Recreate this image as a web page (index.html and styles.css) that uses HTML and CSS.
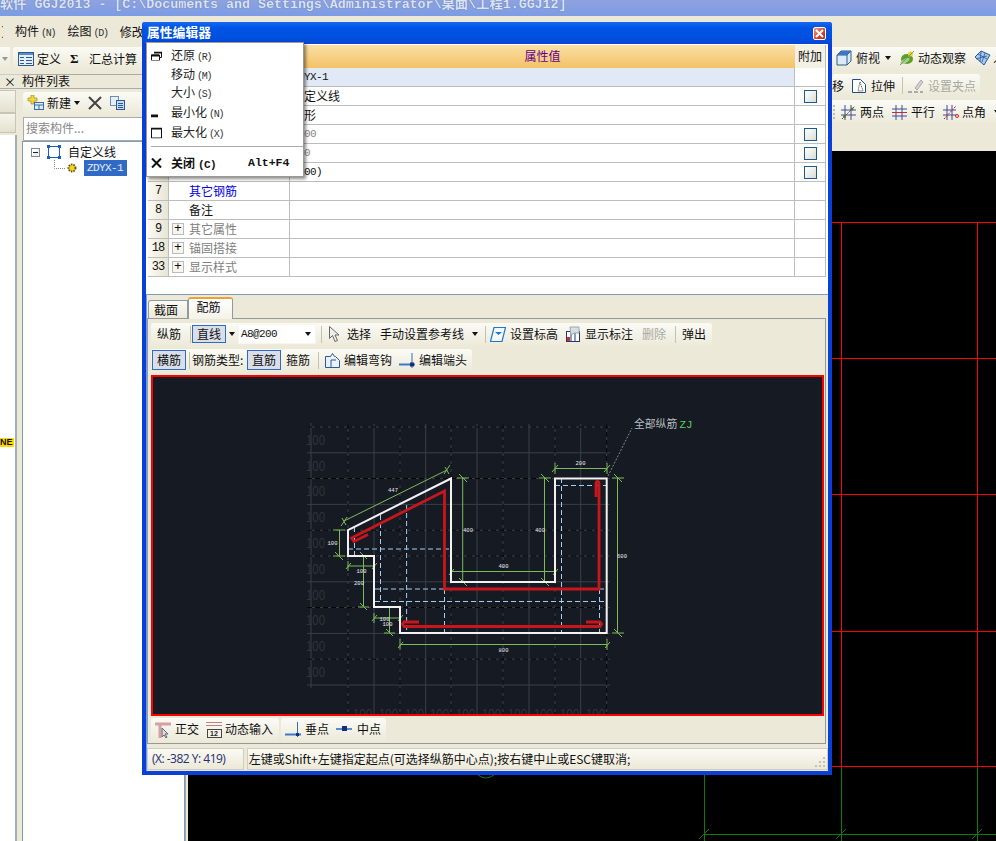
FILE: index.html
```html
<!DOCTYPE html>
<html lang="zh">
<head>
<meta charset="utf-8">
<title>GGJ2013</title>
<link rel="stylesheet" href="styles.css">
</head>
<body>
<div class="app">
  <div class="titlebar">软件 GGJ2013 - [C:\Documents and Settings\Administrator\桌面\工程1.GGJ12]</div>
  <div class="menubar">
    <span class="menu-cut">)</span>
    <span class="ml12">构件<span class="k">(N)</span></span>
    <span class="ml12">绘图<span class="k">(D)</span></span>
    <span class="ml12">修改</span>
  </div>
  <div class="workspace">
    <div class="side">
      <div class="side-tools">
        <span class="cutbar"><i class="arrow gray"></i></span>
        <div class="bar side-bar">
          <svg class="ml5" width="16" height="14" viewBox="0 0 16 14"><rect x=".5" y=".5" width="15" height="13" fill="#e6eef8" stroke="#2a5a96"/><rect x="1" y="1" width="14" height="2" fill="#5a8cc8"/><path d="M2 5.500h4M2 8.500h4M2 11.500h4M8 5.500h6M8 8.500h6M8 11.500h6" stroke="#2a5a96"/></svg>
          <span class="ml3">定义</span>
          <b class="sigma ml9">Σ</b>
          <span class="ml9">汇总计算</span>
        </div>
      </div>
      <div class="panels">
        <div class="strip">
          <div class="strip-head">×</div>
          <div class="strip-btn"></div>
          <div class="strip-btn short"></div>
          <div class="strip-body"><span class="ne">NE</span></div>
        </div>
        <div class="list">
          <div class="list-head">构件列表</div>
          <div class="bar list-bar">
            <svg class="ml4" width="17" height="15" viewBox="0 0 17 15"><path d="M4 0h3v3h3v3H7v3H4V6H1V3h3z" fill="#f4d640" stroke="#a88a18" stroke-width=".7"/><rect x="7.500" y="7.500" width="9" height="7" fill="#dfe8f5" stroke="#3a6ea8"/><path d="M8 10h8M12 10v4" stroke="#3a6ea8"/></svg>
            <span class="ml3">新建</span>
            <i class="arrow ml3"></i>
            <svg class="ml8" width="14" height="14" viewBox="0 0 14 14"><path d="M1 1l12 12M13 1L1 13" stroke="#444" stroke-width="2"/></svg>
            <svg class="ml8" width="15" height="14" viewBox="0 0 15 14"><rect x=".5" y=".5" width="8" height="9" fill="#e6eef8" stroke="#6a8fbf"/><rect x="6.500" y="4.500" width="8" height="9" fill="#c8daf2" stroke="#2a5a96"/><path d="M8 7.500h5M8 9.500h5M8 11.500h5" stroke="#2a5a96"/></svg>
          </div>
          <div class="search">搜索构件...</div>
          <div class="tree">
            <div class="tree-row first">
              <span class="minus"></span>
              <svg class="ml7" width="14" height="14" viewBox="0 0 14 14"><rect x="1.500" y="1.500" width="11" height="11" fill="none" stroke="#1f5fb8"/><path d="M0 0h3v3H0zM11 0h3v3h-3zM0 11h3v3H0zM11 11h3v3h-3z" fill="#1f5fb8"/></svg>
              <span class="ml7">自定义线</span>
            </div>
            <div class="tree-row second">
              <svg width="24" height="16" viewBox="0 0 24 16"><path d="M.5 0v8.500H12" stroke="#888" stroke-dasharray="1 1" fill="none"/><circle cx="18" cy="8" r="3.500" fill="#f2d820" stroke="#6a5a10" stroke-dasharray="1.500 1" stroke-width="2"/></svg>
              <span class="selected">ZDYX-1</span>
            </div>
          </div>
        </div>
      </div>
    </div>
    <div class="main">
      <div class="main-tools">
        <div class="bar rbar one">
          <svg class="ml4" width="16" height="16" viewBox="0 0 16 16"><path d="M1 5l4-4h10v10l-4 4H1z" fill="#dceaf8" stroke="#2a5a96"/><path d="M1 5h10v10M11 5l4-4" fill="none" stroke="#2a5a96"/><path d="M5 1h10L11 5H1z" fill="#3c78c0"/></svg>
          <span class="ml4">俯视</span>
          <i class="arrow ml5"></i>
          <svg class="ml8" width="16" height="16" viewBox="0 0 16 16"><ellipse cx="8" cy="9" rx="6" ry="5" fill="#58a028"/><ellipse cx="6" cy="11" rx="5" ry="2" fill="#a8d080" transform="rotate(-30 6 11)"/><circle cx="11.500" cy="4" r="2.500" fill="#e8d820"/><path d="M1 15L15 1" stroke="#888"/></svg>
          <span class="ml3">动态观察</span>
          <svg class="ml8" width="17" height="16" viewBox="0 0 17 16"><path d="M1 7l6-6 9 4-6 10z" fill="#a8c8ee" stroke="#2a5a96"/><path d="M4 4l9 5M7 1l-1 11M11 3l-3 9M2 9l11-3" stroke="#2a5a96" stroke-width=".8"/></svg>
          <span class="ml2">人</span>
        </div>
        <div class="bar rbar two">
          <span>移</span>
          <svg class="ml8" width="14" height="14" viewBox="0 0 14 14"><path d="M.5 .5h8l5 5v8H.5z" fill="#fff" stroke="#1e4f8a"/><path d="M8 3l3 9H6z" fill="none" stroke="#333" stroke-dasharray="1 1"/></svg>
          <span class="ml5">拉伸</span>
          <i class="sep ml7"></i>
          <svg class="ml5" width="16" height="16" viewBox="0 0 16 16"><path d="M7 10l6-8 2 2-6 8z" fill="#d4d4cc" stroke="#aaa"/><path d="M0 14h4M6 14h4M12 14h3" stroke="#aaa" stroke-width="2"/></svg>
          <span class="ml4 muted">设置夹点</span>
        </div>
        <div class="bar rbar three">
          <i class="grip ml1"></i>
          <svg class="ml6" width="15" height="15" viewBox="0 0 15 15"><path d="M4 0v15M10 0v15M0 5h15M0 10h15" stroke="#3c4c9c"/><path d="M1 14L14 1" stroke="#d02020" stroke-dasharray="2 1"/><circle cx="3.500" cy="11.500" r="1.500" fill="#3a8a20"/><circle cx="11" cy="4" r="1.500" fill="#3a8a20"/></svg>
          <span class="ml4">两点</span>
          <svg class="ml8" width="15" height="15" viewBox="0 0 15 15"><path d="M4 0v15M10 0v15M0 4h15M0 11h15" stroke="#3c4c9c"/><path d="M0 7.500h15" stroke="#c03030"/></svg>
          <span class="ml4">平行</span>
          <svg class="ml8" width="16" height="15" viewBox="0 0 16 15"><path d="M4 0v15M9 0v15M0 5h13M0 10h13" stroke="#3c4c9c"/><path d="M1 14L13 1" stroke="#d02020" stroke-dasharray="2 1"/><circle cx="14" cy="11" r="1.500" fill="none" stroke="#d02020"/></svg>
          <span class="ml3">点角</span>
          <i class="arrow ml8"></i>
        </div>
      </div>
      <div class="canvas">
        <svg class="canvas-svg" width="808" height="690" viewBox="188 151 808 690">
          <path class="bg-red" d="M188 222.500H996M188 358.500H996M188 494.500H996M188 631.500H996M188 766.500H996M841.500 222V767M977.500 222V767"/>
          <path class="bg-green" d="M704.500 767V841M841.500 767V841M977.500 767V841M704 834.500H996M699 839l10-10M836 839l10-10M972 839l10-10M478 775q8 6 16 0"/>
        </svg>
      </div>
    </div>
  </div>
</div>

<section class="dialog">
  <header class="dialog-title">
    <span class="dialog-name">属性编辑器</span>
    <span class="close"><svg width="9" height="9" viewBox="0 0 9 9"><path d="M1 1l7 7M8 1L1 8" stroke="#fff" stroke-width="2"/></svg></span>
  </header>
  <div class="grid-wrap">
    <div class="row head">
      <div class="cell no"></div>
      <div class="cell"></div>
      <div class="cell val-head">属性值</div>
      <div class="cell add-head">附加</div>
    </div>
    <div class="row active"><div class="cell no"></div><div class="cell name"></div><div class="cell val mono">ZDYX-1</div><div class="cell add"></div></div>
    <div class="row"><div class="cell no"></div><div class="cell name"></div><div class="cell val">自定义线</div><div class="cell add"><i class="check"></i></div></div>
    <div class="row"><div class="cell no"></div><div class="cell name"></div><div class="cell val">异形</div><div class="cell add"></div></div>
    <div class="row"><div class="cell no"></div><div class="cell name"></div><div class="cell val mono faint">1200</div><div class="cell add"><i class="check"></i></div></div>
    <div class="row"><div class="cell no"></div><div class="cell name"></div><div class="cell val mono faint">100</div><div class="cell add"><i class="check"></i></div></div>
    <div class="row"><div class="cell no"></div><div class="cell name"></div><div class="cell val mono">(200)</div><div class="cell add"><i class="check"></i></div></div>
    <div class="row"><div class="cell no">7</div><div class="cell name link">其它钢筋</div><div class="cell val"></div><div class="cell add"></div></div>
    <div class="row"><div class="cell no">8</div><div class="cell name">备注</div><div class="cell val"></div><div class="cell add"></div></div>
    <div class="row"><div class="cell no">9</div><div class="cell name group"><i class="plus">+</i>其它属性</div><div class="cell val"></div><div class="cell add"></div></div>
    <div class="row"><div class="cell no">18</div><div class="cell name group"><i class="plus">+</i>锚固搭接</div><div class="cell val"></div><div class="cell add"></div></div>
    <div class="row"><div class="cell no">33</div><div class="cell name group"><i class="plus">+</i>显示样式</div><div class="cell val"></div><div class="cell add"></div></div>
  </div>
  <div class="tabs">
    <span class="tab">截面</span>
    <span class="tab on">配筋</span>
  </div>
  <div class="panel">
    <div class="bar tb">
      <span class="ml6">纵筋</span>
      <i class="sep ml9"></i>
      <span class="btn ml1">直线</span>
      <i class="arrow ml3"></i>
      <span class="combo ml3"><span class="mono">A8@200</span><i class="arrow"></i></span>
      <i class="sep ml5"></i>
      <svg class="ml7" width="11" height="16" viewBox="0 0 11 16"><path d="M.5 .5v12l3-3 2.500 6 2.500-1-2.500-5.500H10z" fill="#eee" stroke="#666"/></svg>
      <span class="ml7">选择</span>
      <span class="ml9">手动设置参考线</span>
      <i class="arrow ml8"></i>
      <i class="sep ml7"></i>
      <svg class="ml4" width="16" height="15" viewBox="0 0 16 15"><path d="M4 .5h11.500L12 14.500H.5z" fill="#f4f8fc" stroke="#1f78c8" stroke-width="1.200"/><path d="M5 5h7l-3.500 3z" fill="#1f78c8"/></svg>
      <span class="ml4">设置标高</span>
      <svg class="ml8" width="14" height="16" viewBox="0 0 14 16"><rect x=".5" y="5.500" width="13" height="10" fill="#fff" stroke="#1e3c78"/><path d="M5 6v10M9 6v10" stroke="#1e3c78"/><path d="M4 1h9v6H8L5 9z" fill="#d8dee8" stroke="#9aa"/><rect x="1" y="11" width="3" height="4" fill="#d03020"/></svg>
      <span class="ml5">显示标注</span>
      <span class="ml9 muted">删除</span>
      <i class="sep ml9"></i>
      <span class="ml6">弹出</span>
    </div>
    <div class="bar tb second-tb">
      <span class="btn ml1">横筋</span>
      <i class="sep ml3"></i>
      <span class="ml2 type-label">钢筋类型:</span>
      <span class="btn ml3">直筋</span>
      <span class="ml5">箍筋</span>
      <i class="sep ml8"></i>
      <svg class="ml6" width="15" height="15" viewBox="0 0 15 15"><path d="M.5 3.500h5l2-3 2 3h1l4 4v7H.5z" fill="#eaf1fa" stroke="#2a5a96"/><path d="M6 14V7h5" fill="none" stroke="#2a5a96"/></svg>
      <span class="ml4">编辑弯钩</span>
      <svg class="ml7" width="16" height="15" viewBox="0 0 16 15"><path d="M0 11.500h16" stroke="#3a78c8" stroke-width="2"/><path d="M13 0v15" stroke="#3a6ea8"/><rect x="11" y="9.500" width="4" height="4" fill="#1a2c80"/></svg>
      <span class="ml4">编辑端头</span>
    </div>
    <div class="draw">
      <svg class="draw-svg" width="669" height="337" viewBox="153 377 669 337">
        <path class="grid-g" d="M307 427H610M307 452.800H610M307 478.600H610M307 504.400H610M307 530.200H610M307 556H610M307 581.800H610M307 607.600H610M307 633.400H610M307 659.200H610M307 685H610M311 423V688M348 424V714M374 424V714M400 424V714M425.700 424V714M451 424V714M477 424V714M503 424V714M529 424V714M555 424V714M580.700 424V714M606.700 424V714"/>
        <path class="grid-b" d="M307 427H610M307 478.600H610M307 530.200H610M307 556H610M307 607.600H610M307 659.200H610M348 424V714M400 424V714M451 424V714M503 424V714M555 424V714M606.700 424V714"/>
        <g class="g100">
          <text x="306" y="445" textLength="19" lengthAdjust="spacingAndGlyphs">100</text>
          <text x="306" y="471" textLength="19" lengthAdjust="spacingAndGlyphs">100</text>
          <text x="306" y="496" textLength="19" lengthAdjust="spacingAndGlyphs">100</text>
          <text x="306" y="522" textLength="19" lengthAdjust="spacingAndGlyphs">100</text>
          <text x="306" y="548" textLength="19" lengthAdjust="spacingAndGlyphs">100</text>
          <text x="306" y="574" textLength="19" lengthAdjust="spacingAndGlyphs">100</text>
          <text x="306" y="600" textLength="19" lengthAdjust="spacingAndGlyphs">100</text>
          <text x="306" y="625" textLength="19" lengthAdjust="spacingAndGlyphs">100</text>
          <text x="306" y="651" textLength="19" lengthAdjust="spacingAndGlyphs">100</text>
          <text x="306" y="677" textLength="19" lengthAdjust="spacingAndGlyphs">100</text>
          <text x="353" y="719" textLength="19" lengthAdjust="spacingAndGlyphs">100</text>
          <text x="379" y="719" textLength="19" lengthAdjust="spacingAndGlyphs">100</text>
          <text x="405" y="719" textLength="19" lengthAdjust="spacingAndGlyphs">100</text>
          <text x="430" y="719" textLength="19" lengthAdjust="spacingAndGlyphs">100</text>
          <text x="456" y="719" textLength="19" lengthAdjust="spacingAndGlyphs">100</text>
          <text x="482" y="719" textLength="19" lengthAdjust="spacingAndGlyphs">100</text>
          <text x="508" y="719" textLength="19" lengthAdjust="spacingAndGlyphs">100</text>
          <text x="534" y="719" textLength="19" lengthAdjust="spacingAndGlyphs">100</text>
          <text x="560" y="719" textLength="19" lengthAdjust="spacingAndGlyphs">100</text>
          <text x="586" y="719" textLength="19" lengthAdjust="spacingAndGlyphs">100</text>
        </g>
        <path class="dash-blue" d="M354.500 527V556M380.500 515V601M406.600 505V633M348 549H451M375 589H606M375 601.500H606M444.500 589V633M561.500 478V633M599.500 589V633M555 485.500H606"/>
        <path class="dimline" d="M344 521L447 470M342 518l4 7M445 467l4 7M341 526l6-9M444 474l6-9M339.500 530V556M333 530h12M333 556h12M335 552l8 8M462.700 478V582M457 478h12M457 582h12M459 578l8 8M459 474l8 8M544.500 478V582M539 478h12M539 582h12M541 578l8 8M541 474l8 8M451 571.500H555M451 566v10M555 566v10M449 575l5-6M553 575l5-6M555 468.500H607M555 463v11M607 463v11M552 472l6-7M604 472l6-7M617.500 478V633M612 478h12M612 633h12M614 629l8 8M614 474l8 8M348 566H374M348 561v10M374 561v10M346 569l5-6M372 569l5-6M363.500 556V607M358 556h11M358 607h11M360 603l7 7M360 552l7 7M374 618H400M374 613v10M400 613v10M372 621l5-6M398 621l5-6M389.500 607V633M384 607h11M384 633h11M386 629l7 7M400 644.500H607M400 639v11M607 639v11M398 648l5-6M605 648l5-6"/>
        <path class="shape" d="M451 478.500L348 530V556H374V607H400V633H606.700V478.500H555V582H451Z"/>
        <path class="rebar" d="M368 534.500L354 541.500L351.500 538L444.500 491V589H599V484Q599 481.500 597.500 481.500T596 484V497"/>
        <path class="rebar" d="M419 622H404L402.500 624L404 626.500H600L601.500 624L600 622H586"/>
        <path class="callout" d="M608 476L632 428"/>
        <text class="call-text" x="634" y="428">全部纵筋 <tspan class="call-zj">ZJ</tspan></text>
        <g class="dim-text">
          <text x="393" y="492">447</text>
          <text x="332.500" y="545">100</text>
          <text x="468" y="532">400</text>
          <text x="540" y="532">400</text>
          <text x="503.500" y="568">400</text>
          <text x="580.500" y="465">200</text>
          <text x="622" y="558">600</text>
          <text x="361.500" y="573">100</text>
          <text x="359" y="584.500">200</text>
          <text x="384.500" y="621">100</text>
          <text x="387.500" y="626">100</text>
          <text x="503.500" y="651.500">800</text>
        </g>
      </svg>
    </div>
    <div class="bottom-tools">
      <div class="bar bb first-bb">
        <svg class="ml4" width="16" height="17" viewBox="0 0 16 17"><path d="M0 3h16M5 3v14" stroke="#d8a0a0" stroke-width="3"/><path d="M7 7l6 6-3 0 2 3-1 1-2-3-2 2z" fill="#ddd" stroke="#667"/></svg>
        <span class="ml4">正交</span>
        <svg class="ml7" width="16" height="17" viewBox="0 0 16 17"><path d="M0 1.500h16M0 4.500h16" stroke="#c08080"/><rect x="1.500" y="8.500" width="14" height="8" fill="#f4f2e8" stroke="#444"/><text class="icon-num" x="4" y="15">12</text></svg>
        <span class="ml3">动态输入</span>
      </div>
      <div class="bar bb">
        <svg class="ml4" width="16" height="15" viewBox="0 0 16 15"><path d="M0 12.500h16" stroke="#3a78c8" stroke-width="2"/><path d="M12.500 0v15" stroke="#3a6ea8"/><rect x="11" y="11" width="3" height="3" fill="#1a2c80"/></svg>
        <span class="ml4">垂点</span>
        <svg class="ml7" width="16" height="6" viewBox="0 0 16 6"><path d="M0 3h16" stroke="#5a8cd0" stroke-width="2"/><rect x="6" y="0" width="5" height="5" fill="#1a2c80"/></svg>
        <span class="ml5">中点</span>
      </div>
    </div>
  </div>
  <footer class="status">
    <span class="st-coords">(X: -382 Y: 419)</span>
    <span class="st-msg">左键或Shift+左键指定起点(可选择纵筋中心点);按右键中止或ESC键取消;
      <svg class="resize" width="12" height="12" viewBox="0 0 12 12"><path d="M9 1h2v2H9zM5 5h2v2H5zM9 5h2v2H9zM1 9h2v2H1zM5 9h2v2H5zM9 9h2v2H9z" fill="#c4c2b6"/></svg>
    </span>
  </footer>
  <nav class="sysmenu">
    <div class="mi h19"><svg width="11" height="9" viewBox="0 0 11 9"><path d="M3 1h7v5H8M0 3.500h8V9H0z" fill="none" stroke="#111" transform="translate(.5 0)"/><path d="M3 0h8v2H3zM0 3h8v2H0z" fill="#111"/></svg><span class="mt">还原<span class="k">(R)</span></span></div>
    <div class="mi h18"><span class="mt">移动<span class="k">(M)</span></span></div>
    <div class="mi h19"><span class="mt">大小<span class="k">(S)</span></span></div>
    <div class="mi h20"><svg width="11" height="11" viewBox="0 0 11 11"><path d="M0 8h7v3H0z" fill="#111"/></svg><span class="mt">最小化<span class="k">(N)</span></span></div>
    <div class="mi h21"><svg width="11" height="11" viewBox="0 0 11 11"><path d="M.5 1h10v9.500H.5z" fill="none" stroke="#111"/><path d="M0 0h11v2H0z" fill="#111"/></svg><span class="mt">最大化<span class="k">(X)</span></span></div>
    <div class="msep"></div>
    <div class="mi strong"><svg width="11" height="11" viewBox="0 0 11 11"><path d="M1 1l9 9M10 1l-9 9" stroke="#111" stroke-width="2"/></svg><span class="mt">关闭<span class="k bold">(C)</span></span><span class="accel">Alt+F4</span></div>
  </nav>
</section>
</body>
</html>
```
FILE: styles.css
```css
* { box-sizing: border-box; }
html, body { margin: 0; padding: 0; }
body {
  width: 996px;
  height: 841px;
  overflow: hidden;
  position: relative;
  background: #ece9d8;
  color: #111;
  font: 12px/16px "Noto Sans CJK SC", "Liberation Sans", sans-serif;
}
svg { display: block; flex: none; }
i { display: block; font-style: normal; flex: none; }

.ml1 { margin-left: 1px; } .ml2 { margin-left: 2px; } .ml3 { margin-left: 3px; }
.ml4 { margin-left: 4px; } .ml5 { margin-left: 5px; } .ml6 { margin-left: 6px; }
.ml7 { margin-left: 7px; } .ml8 { margin-left: 8px; } .ml9 { margin-left: 9px; }
.ml12 { margin-left: 12px; }

.app { display: flex; flex-direction: column; height: 841px; }
.titlebar {
  height: 16px;
  overflow: hidden;
  white-space: nowrap;
  background: linear-gradient(#8ea2df, #7c9ce4);
  color: #dbe3f6;
  font: bold 13.300px/10px "Liberation Mono", "Noto Sans CJK SC", monospace;
  text-shadow: 0 0 1px #4d5f98;
}
.menubar {
  height: 30px;
  display: flex;
  align-items: center;
  white-space: nowrap;
  padding-top: 1px;
}
.menu-cut { width: 3px; overflow: hidden; font-family: "Liberation Mono", monospace; }
.k { font: 10px/12px "Liberation Mono", monospace; letter-spacing: -1.200px; margin-left: 2px; color: #333; }
.k.bold { font-weight: bold; color: #111; font-size: 11px; letter-spacing: -.6px; margin-left: 3px; }
.workspace { flex: 1; display: flex; min-height: 0; }

.bar {
  display: inline-flex;
  align-items: center;
  white-space: nowrap;
  background: linear-gradient(#fbfbf6, #ece9d8);
  border-radius: 3px;
}
.arrow {
  width: 0; height: 0;
  border: 3.500px solid transparent;
  border-top: 4px solid #111;
  border-bottom: 0;
}
.arrow.gray { border-top-color: #999; }
.sep { width: 1px; height: 17px; background: #c5c2b0; }
.grip { width: 2px; height: 14px; border-left: 2px dotted #bbb; }
.muted { color: #aaa9a0; }

.side { width: 188px; flex: none; display: flex; flex-direction: column; }
.side-tools { height: 24px; display: flex; padding-top: 1px; }
.cutbar { width: 10px; display: flex; align-items: center; justify-content: center; background: linear-gradient(#fbfbf6, #ece9d8); }
.side-bar { margin-left: 3px; width: 132px; height: 23px; }
.sigma { font: bold 13px/16px "Liberation Serif", serif; width: 10px; }
.panels { flex: 1; display: flex; padding-top: 4px; min-height: 0; }
.strip { width: 22px; display: flex; flex-direction: column; flex: none; padding-right: 4px; }
.strip-head { height: 15px; border-bottom: 1px solid #aaa; text-align: right; padding-right: 6px; margin-right: -4px; line-height: 14px; border-top: 1px solid #ccc; }
.strip-btn { height: 23px; margin-top: 1px; background: linear-gradient(#f6f5ec, #e4e1d0); border: 1px solid #c8c5b4; border-left: 0; margin-right: 2px; }
.strip-btn.short { height: 20px; margin-top: 0; }
.strip-body { flex: 1; background: #fff; margin-top: 2px; width: 17px; border-right: 2px solid #a0aeba; padding-top: 303px; }
.ne { display: block; width: 14px; font: bold 9px/9px "Liberation Sans", sans-serif; background: #ffd800; color: #111; white-space: nowrap; overflow: hidden; }
.list { width: 164px; flex: none; display: flex; flex-direction: column; border-right: 1px solid #9aa; }
.list-head { height: 15px; border: 1px solid #aaa; border-width: 1px 0; line-height: 12px; font-size: 12px; }
.list-bar { margin-top: 3px; height: 23px; width: 120px; margin-left: 1px; padding-bottom: 2px; }
.search {
  margin-top: 2px; margin-left: 1px;
  height: 24px; line-height: 19px;
  background: #fff; border: 1px solid #aaa;
  color: #888; padding-left: 2px;
}
.tree { flex: 1; background: #fff; border: 1px solid #7f9db9; border-bottom: 0; padding-top: 1px; }
.tree-row { display: flex; align-items: center; }
.tree-row.first { height: 18px; padding-left: 8px; }
.tree-row.second { height: 16px; margin-top: -1px; padding-left: 31px; }
.minus { width: 9px; height: 9px; border: 1px solid #7a8a99; background: linear-gradient(to right bottom, #fff 0 45%, #eee 46%); position: relative; }
.minus::after { content: ""; position: absolute; left: 1px; right: 1px; top: 3px; height: 1px; background: #222; }
.selected { margin-left: 6px; width: 43px; height: 16px; background: #316ac5; color: #e6ecf7; font: 11px/16px "Liberation Mono", monospace; letter-spacing: -.6px; padding-left: 3px; }

.main { flex: 1; min-width: 0; display: flex; flex-direction: column; overflow: hidden; }
.main-tools { height: 105px; flex: none; display: flex; flex-direction: column; padding-left: 644px; padding-top: 1px; }
.rbar { flex: none; }
.one { height: 23px; width: 164px; border-radius: 0; overflow: hidden; padding-bottom: 1px; }
.two { height: 22px; width: 148px; margin-top: 4px; padding-top: 1px; }
.three { height: 24px; width: 164px; margin-top: 4px; border-radius: 0; }
.canvas { flex: 1; background: #000; min-height: 0; }
.bg-red { stroke: #ff0000; fill: none; }
.bg-green { stroke: #0f7a0f; fill: none; }

.dialog {
  position: absolute;
  left: 142px; top: 22px;
  width: 690px; height: 753px;
  background: #ece9d8;
  border: 4px solid #0a3fd8;
  border-top: 0;
  border-radius: 3px 3px 0 0;
  box-shadow: inset 1px 0 #6f9cf0;
  display: flex;
  flex-direction: column;
}
.dialog-title {
  margin: 0 -4px;
  height: 22px;
  flex: none;
  padding: 1px 5px 0 5px;
  display: flex;
  align-items: center;
  justify-content: space-between;
  background: linear-gradient(#1a6af0, #0054e6 25%, #0050e0 70%, #0a44d8);
  color: #fff;
  font-weight: bold;
  font-size: 12.800px;
  border-radius: 3px 3px 0 0;
}
.dialog-name { margin-bottom: 3px; }
.close {
  width: 13px; height: 13px;
  display: flex; align-items: center; justify-content: center;
  border: 1px solid #fff;
  border-radius: 2px;
  background: linear-gradient(135deg, #f0a080, #d8402a 60%, #c02810);
  margin-right: 1px;
}
.grid-wrap {
  height: 251px;
  flex: none;
  background: #fff;
  padding: 1px 0 0 2px;
  border-bottom: 1px solid #7f9db9;
}
.row { display: grid; grid-template-columns: 21px 121px 505px 31px; height: 19px; }
.row.head { height: 23px; }
.cell {
  border-right: 1px solid #bdbdbd;
  border-bottom: 1px solid #bdbdbd;
  line-height: 18px;
  overflow: hidden;
  white-space: nowrap;
}
.head .cell {
  border: 0;
  background: linear-gradient(#fbdfa6, #f2c266);
}
.head .val-head { color: #660090; text-align: center; line-height: 21px; }
.head .add-head { background: #f3f0e4; text-align: center; line-height: 21px; border-right: 1px solid #bdbdbd; }
.cell.no {
  background: linear-gradient(to right, #fbfaf4, #e8e5d4);
  text-align: center;
  font: 12px/18px "Liberation Mono", monospace;
  letter-spacing: -1px;
}
.cell.name { padding-left: 20px; }
.cell.group { padding-left: 3px; color: #808080; display: flex; align-items: center; }
.cell.link { color: #0000e0; }
.cell.val { padding-left: 2px; }
.mono { font: 11px/18px "Liberation Mono", monospace; letter-spacing: -.6px; }
.faint { color: #888; }
.active .val, .active .name { background: #e0e9f5; }
.add { display: flex; align-items: center; justify-content: center; }
.check { width: 13px; height: 13px; border: 1px solid #1b5a8e; background: linear-gradient(135deg, #fff, #dcdcd4); }
.plus {
  width: 12px; height: 12px; margin-right: 5px;
  border: 1px solid #bbb; background: #f6f5ee;
  color: #111;
  font: 13px/10px "Liberation Mono", monospace;
  text-align: center;
}
.tabs { height: 23px; flex: none; display: flex; align-items: flex-end; padding-left: 2px; }
.tab {
  width: 40px; height: 18px; line-height: 18px;
  text-align: center;
  padding-right: 4px;
  background: linear-gradient(#fbfbf6, #ece9d8);
  border: 1px solid #919b9c; border-bottom: 0;
  border-radius: 3px 0 0 0;
}
.tab.on {
  width: 45px; height: 22px; line-height: 16px;
  background: linear-gradient(#fff, #f4f2e8);
  border-top: 2px solid #f0a030;
  border-radius: 3px 3px 0 0;
  margin-bottom: -1px;
  position: relative;
  z-index: 1;
}
.panel {
  height: 426px;
  width: 679px;
  margin-left: 1px;
  flex: none;
  border: 1px solid #919b9c;
  padding: 4px 0 0 3px;
  display: flex;
  flex-direction: column;
  align-items: flex-start;
}
.tb { height: 24px; padding-right: 6px; padding-bottom: 2px; flex: none; }
.second-tb { margin-top: 2px; padding-right: 5px; }
.btn {
  width: 34px; height: 18px; line-height: 16px;
  text-align: center;
  background: #d9dfe9;
  border: 1px solid #316ac5;
}
.second-tb .btn { height: 20px; line-height: 18px; }
.type-label { width: 52px; }
.combo {
  width: 78px; height: 20px;
  background: #fff;
  display: flex; align-items: center; justify-content: space-between;
  padding: 0 4px 0 2px;
  border: 1px solid #f6f5ee;
}
.draw {
  width: 673px; height: 341px;
  margin-top: 2px;
  flex: none;
  border: 2px solid #ff0000;
  background: #161a22;
  overflow: hidden;
}
.grid-g { stroke: #393f48; fill: none; }
.grid-b { stroke: #000; fill: none; stroke-dasharray: 5 3; }
.g100 { fill: #2f343c; font: 14px "Liberation Sans", sans-serif; }
.dash-blue { stroke: #a4cdf0; fill: none; stroke-dasharray: 5 3; }
.dimline { stroke: #7dbb5a; fill: none; }
.shape { stroke: #f2f2f2; stroke-width: 2; fill: none; }
.rebar { stroke: #c8161d; stroke-width: 2.800; fill: none; }
.callout { stroke: #888; stroke-dasharray: 2 1.500; fill: none; }
.call-text { fill: #b8bcc0; font-size: 10.800px; }
.call-zj { fill: #5ccf5c; font-family: "Liberation Mono", monospace; }
.dim-text { fill: #e8e8f0; font: 5.500px "Liberation Mono", monospace; text-anchor: middle; }
.icon-num { font: bold 7px "Liberation Sans", sans-serif; fill: #222; }
.bottom-tools { display: flex; margin-top: 2px; gap: 2px; height: 24px; }
.bb { height: 24px; padding-right: 5px; padding-bottom: 2px; }
.first-bb { padding-right: 6px; }
.status { display: flex; height: 22px; margin-top: 4px; flex: none; gap: 3px; padding-left: 1px; }
.status span { background: linear-gradient(#fbfaf4, #ece9d8); border: 1px solid #cfcdc0; line-height: 20px; white-space: nowrap; }
.st-coords { width: 97px; padding-left: 4px; font: 12px/20px "Open Sans", "Liberation Sans", sans-serif; color: #1e2f70; letter-spacing: -.5px; }
.status .st-msg { width: 582px; padding-left: 1px; position: relative; }
.resize { position: absolute; right: 1px; bottom: 1px; }

.sysmenu {
  position: absolute;
  left: 0; top: 20px;
  width: 158px; height: 135px;
  background: #fff;
  border: 1px solid #9a9a90;
  box-shadow: 2px 2px 3px rgba(0,0,0,.45);
  padding: 3px 0 0 4px;
  z-index: 3;
  color: #222;
}
.mi { display: flex; align-items: center; position: relative; padding-left: 20px; }
.mi > svg { position: absolute; left: 0; top: 50%; transform: translateY(-50%); }
.h18 { height: 18px; } .h19 { height: 19px; } .h20 { height: 20px; } .h21 { height: 21px; }
.msep { height: 1px; background: #aaa; margin: 3px 2px 4px 0; width: 152px; }
.strong { height: 24px; font-weight: bold; color: #111; }
.accel { position: absolute; left: 97px; font: bold 11.500px/16px "Liberation Mono", monospace; }
```
